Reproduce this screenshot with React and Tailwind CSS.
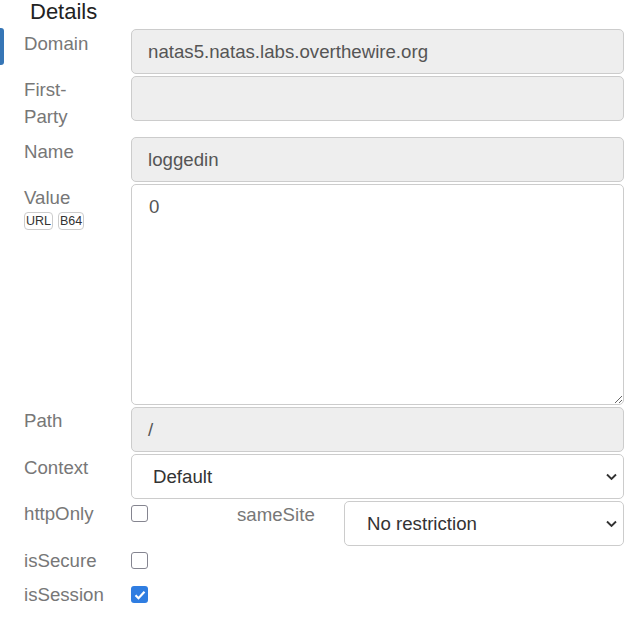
import React from "react";

const font = { fontFamily: '"Liberation Sans", Arial, sans-serif' };

function Label({ children, className = "" }) {
  return (
    <div className={"w-[107px] shrink-0 text-[18.67px] leading-[26.67px] text-[#777] " + className}>
      {children}
    </div>
  );
}

function ReadInput({ value }) {
  return (
    <div className="flex-1 h-[45px] rounded-[5px] border border-[#ccc] bg-[#eee] px-[16px] flex items-center text-[18.67px] text-[#555]">
      {value}
    </div>
  );
}

function Chevron() {
  return (
    <svg className="pointer-events-none absolute right-[7px] top-1/2 -translate-y-1/2" width="11" height="7" viewBox="0 0 11 7" fill="none">
      <path d="M1 1l4.5 4.5L10 1" stroke="#333" strokeWidth="1.9" />
    </svg>
  );
}

function SelectBox({ value, className = "", pl = "pl-[21px]" }) {
  return (
    <div className={"relative h-[45px] " + className}>
      <select
        defaultValue={value}
        className={"appearance-none w-full h-full rounded-[5px] border border-[#ccc] bg-white text-[18.67px] text-[#333] outline-none " + pl}
        style={font}
      >
        <option>{value}</option>
      </select>
      <Chevron />
    </div>
  );
}

function Check({ checked }) {
  if (checked) {
    return (
      <div className="mt-[4px] w-[17px] h-[17px] rounded-[3px] bg-[#2f7de1] flex items-center justify-center">
        <svg width="12" height="10" viewBox="0 0 12 10" fill="none">
          <path d="M1.5 5.2l3 3L10.5 1.8" stroke="white" strokeWidth="2.2" />
        </svg>
      </div>
    );
  }
  return <div className="mt-[4px] w-[17px] h-[17px] rounded-[3px] border-[1.6px] border-[#858590] bg-white" />;
}

export default function App() {
  return (
    <div className="relative w-[635px] h-[628px] bg-white overflow-hidden" style={font}>
      <div className="absolute left-0 top-[28px] w-[4px] h-[37px] rounded-r-[3px] bg-[#3676b6]" />
      <div className="pl-[30px] text-[22px] leading-[24px] text-[#222]">Details</div>
      <div className="mt-[5px] pl-[24px] pr-[11px] flex flex-col gap-[2px]">
        <div className="flex">
          <Label className="pt-[2px]">Domain</Label>
          <ReadInput value="natas5.natas.labs.overthewire.org" />
        </div>
        <div className="flex items-start">
          <Label className="pt-[1px] pb-[5px]">
            First-
            <br />
            Party
          </Label>
          <ReadInput value="" />
        </div>
        <div className="flex">
          <Label className="pt-[2px]">Name</Label>
          <ReadInput value="loggedin" />
        </div>
        <div className="flex">
          <div className="w-[107px] shrink-0 pt-[1px]">
            <div className="text-[18.67px] leading-[26.67px] text-[#777]">Value</div>
            <div className="flex gap-[5px]">
              <span className="h-[18px] px-[1px] rounded-[4px] border border-[#ccc] text-[12.5px] leading-[16px] text-[#333]">URL</span>
              <span className="h-[18px] px-[1px] rounded-[4px] border border-[#ccc] text-[12.5px] leading-[16px] text-[#333]">B64</span>
            </div>
          </div>
          <textarea
            readOnly
            defaultValue="0"
            className="flex-1 h-[221px] rounded-[5px] border border-[#ccc] bg-white pl-[17px] pr-[16px] pt-[9px] pb-[8px] text-[18.67px] leading-[26.67px] text-[#555] resize-y outline-none"
            style={font}
          />
        </div>
        <div className="flex">
          <Label className="pt-[1px]">Path</Label>
          <ReadInput value="/" />
        </div>
        <div className="flex">
          <Label className="pt-[1px]">Context</Label>
          <SelectBox value="Default" className="flex-1" />
        </div>
        <div className="flex">
          <Label>httpOnly</Label>
          <div className="w-[106px] shrink-0">
            <Check />
          </div>
          <div className="w-[107px] shrink-0 pt-[1px] text-[18.67px] leading-[26.67px] text-[#777]">sameSite</div>
          <SelectBox value="No restriction" className="flex-1" pl="pl-[22px]" />
        </div>
        <div className="flex h-[32px]">
          <Label>isSecure</Label>
          <Check />
        </div>
        <div className="flex h-[32px]">
          <Label>isSession</Label>
          <Check checked />
        </div>
      </div>
    </div>
  );
}
